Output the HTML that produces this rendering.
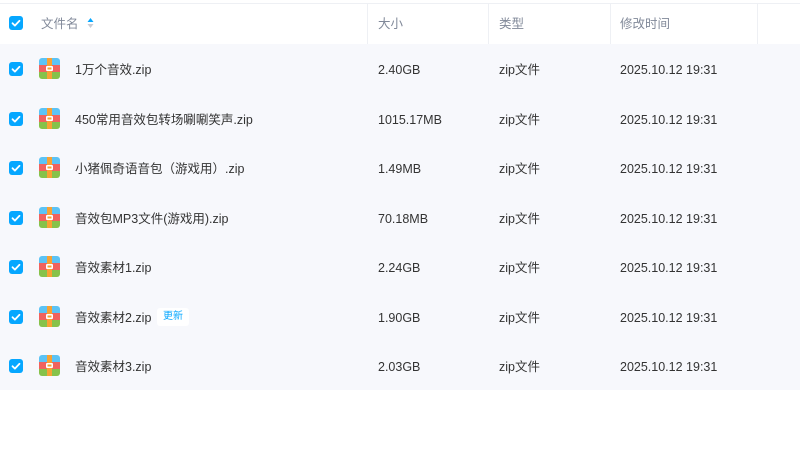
<!DOCTYPE html>
<html><head><meta charset="utf-8"><style>
*{margin:0;padding:0;box-sizing:border-box}
body{width:800px;height:470px;background:#fff;font-family:"Liberation Sans","Noto Sans CJK SC",sans-serif;font-size:12.5px;color:#333;position:relative;overflow:hidden}
.topline{position:absolute;left:0;top:3px;width:800px;height:1px;background:#eef0f4}
.hdr{position:absolute;left:0;top:4px;width:800px;height:40px;color:#818999}
.hdr span{position:absolute;top:1px;height:40px;line-height:38px;white-space:nowrap}
.div{position:absolute;top:4px;width:1px;height:40px;background:#eef0f4}
.body{position:absolute;left:0;top:44px;width:800px;height:346px;background:#f7f8fc}
.row{position:absolute;left:0;width:800px;height:49.5px}
.row span{position:absolute;top:2px;height:49.5px;line-height:49px;white-space:nowrap}
.cb{position:absolute;left:9px;width:14px;height:14px;background:#06a7ff;border-radius:3px}
.cb svg{position:absolute;left:0;top:0}
.ic{position:absolute;left:39px;top:14px;width:21px;height:21px;border-radius:3px;overflow:hidden}
.row span.tag{left:157px;top:16px;height:18px;line-height:18px;background:#fff;color:#06a7ff;font-size:10px;padding:0 6px;border-radius:3px}
</style></head><body>
<div class="topline"></div>
<div class="hdr">
<div class="cb" style="top:12px"><svg width="14" height="14"><path d="M3.5 7.2l2.4 2.4 4.6-4.8" stroke="#fff" stroke-width="1.8" fill="none" stroke-linecap="round" stroke-linejoin="round"/></svg></div>
<span style="left:41px">文件名</span>
<svg style="position:absolute;left:87px;top:13px" width="7" height="12"><path d="M3.5 1L6.5 5H0.5Z" fill="#06a7ff"/><path d="M3.5 11L6.5 7H0.5Z" fill="#c8ccd4"/></svg>
<span style="left:378px">大小</span><span style="left:499px">类型</span><span style="left:620px">修改时间</span>
</div>
<div class="div" style="left:367px"></div><div class="div" style="left:488px"></div><div class="div" style="left:610px"></div><div class="div" style="left:757px"></div>
<div class="body"></div>
<div id="rows"></div>
<script>
var d=[["1万个音效.zip","2.40GB"],["450常用音效包转场唰唰笑声.zip","1015.17MB"],["小猪佩奇语音包（游戏用）.zip","1.49MB"],["音效包MP3文件(游戏用).zip","70.18MB"],["音效素材1.zip","2.24GB"],["音效素材2.zip","1.90GB"],["音效素材3.zip","2.03GB"]];
var h="";
d.forEach(function(r,i){
h+='<div class="row" style="top:'+(44+i*49.5)+'px"><div class="cb" style="top:18px"><svg width="14" height="14"><path d="M3.5 7.2l2.4 2.4 4.6-4.8" stroke="#fff" stroke-width="1.8" fill="none" stroke-linecap="round" stroke-linejoin="round"/></svg></div>'+
'<div class="ic"><svg width="21" height="21"><rect y="0" width="21" height="7" fill="#5cc3f5"/><rect y="7" width="21" height="7" fill="#f0625e"/><rect y="14" width="21" height="7" fill="#86c24a"/><rect x="8" y="0" width="5" height="21" fill="#f7a234"/><rect x="7" y="8" width="7" height="5" rx="1" fill="#fff"/><rect x="8.5" y="9.5" width="4" height="2" fill="#f7a234"/></svg></div>'+
'<span style="left:75px">'+r[0]+'</span>'+(i==5?'<span class="tag">更新</span>':'')+
'<span style="left:378px">'+r[1]+'</span><span style="left:499px">zip文件</span><span style="left:620px">2025.10.12 19:31</span></div>';
});
document.getElementById("rows").innerHTML=h;
</script>
</body></html>
